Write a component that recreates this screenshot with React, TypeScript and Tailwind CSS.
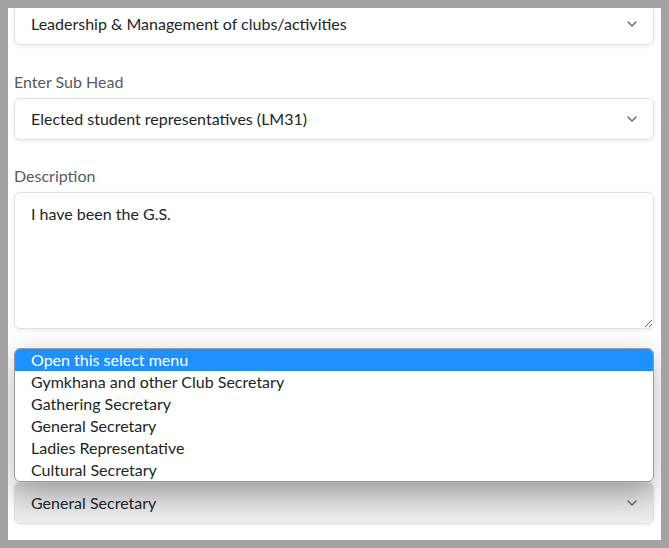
import { ChevronDown } from "lucide-react";

const positions = [
  "Open this select menu",
  "Gymkhana and other Club Secretary",
  "Gathering Secretary",
  "General Secretary",
  "Ladies Representative",
  "Cultural Secretary",
];

const FakeSelect = ({ value, shaded }: { value: string; shaded?: boolean }) => (
  <div
    className={`${
      shaded ? "bg-gradient-to-b from-[#d9d9d9] to-[#eeeeee]" : "bg-white"
    } h-[42px] flex items-center justify-between pl-[16px] pr-[13px] border border-[#dee2e6] rounded-[6px] shadow-[0_1px_4px_rgba(0,0,0,0.08)] text-[#212529]`}
  >
    <span>{value}</span>
    <ChevronDown className="w-[16px] h-[16px] text-[#5f6670]" strokeWidth={2} />
  </div>
);

export default function App() {
  return (
    <div
      className="w-[669px] h-[548px] bg-[#a3a3a3] p-[8px]"
      style={{ fontFamily: "Lato, 'Noto Sans', sans-serif" }}
    >
      <div className="relative w-[653px] h-[532px] bg-white overflow-hidden pl-[6px] pr-[7px] text-[16px] leading-[22px]">
        <div className="mt-[-5px]">
          <FakeSelect value="Leadership & Management of clubs/activities" />

          <label className="block mt-[26px] mb-[5px] text-[#555b61]">Enter Sub Head</label>
          <FakeSelect value="Elected student representatives (LM31)" />

          <label className="block mt-[25px] mb-[5px] text-[#555b61]">Description</label>
          <textarea
            className="block w-full h-[137px] border border-[#dee2e6] rounded-[6px] shadow-[0_1px_4px_rgba(0,0,0,0.08)] pl-[16px] pt-[10px] text-[#212529] resize-y outline-none"
            defaultValue="I have been the G.S."
          />

          {/* position field: its label sits under the open popup */}
          <div className="mt-[153px]">
            <FakeSelect value="General Secretary" shaded />
          </div>
        </div>

        {/* native select popup, opened upward */}
        <div className="absolute left-[6px] right-[7px] top-[340px] border border-[#9a9a9a] rounded-[6px] bg-white overflow-hidden shadow-[0_10px_30px_rgba(0,0,0,0.28)]">
          {positions.map((p, i) => (
            <div
              key={p}
              className={`${
                i === 0 ? "bg-[#1e90ff] text-white" : "text-[#212529]"
              } h-[22px] leading-[22px] pl-[16px]`}
            >
              {p}
            </div>
          ))}
        </div>
      </div>
    </div>
  );
}
